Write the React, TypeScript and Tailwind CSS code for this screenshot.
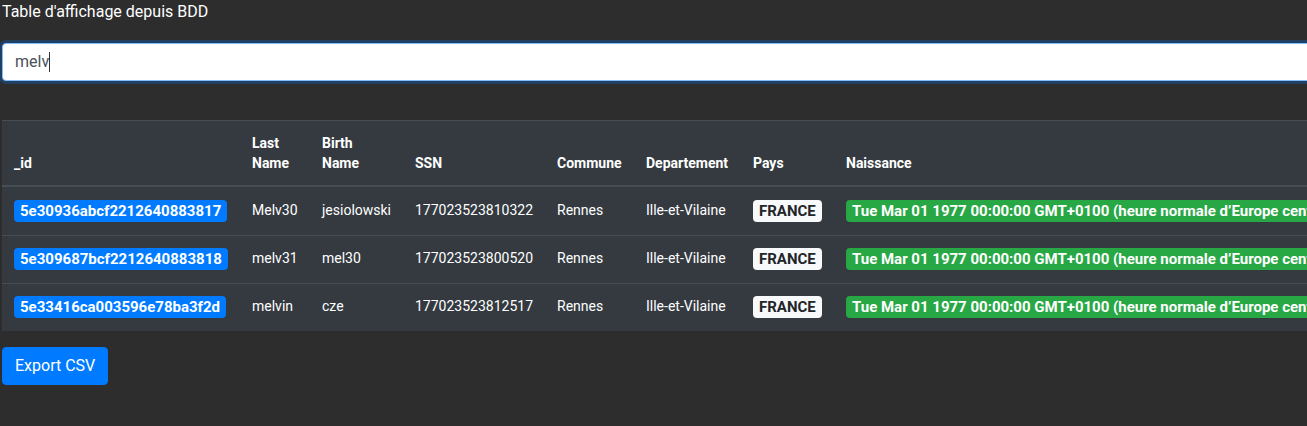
import React from "react";

const rows = [
  { id: "5e30936abcf2212640883817", last: "Melv30", birth: "jesiolowski", ssn: "177023523810322" },
  { id: "5e309687bcf2212640883818", last: "melv31", birth: "mel30", ssn: "177023523800520" },
  { id: "5e33416ca003596e78ba3f2d", last: "melvin", birth: "cze", ssn: "177023523812517" },
];

const cols = "grid grid-cols-[238px_70px_93px_142px_89px_107px_93px_1fr]";

export default function App() {
  return (
    <div className="w-full h-[426px] overflow-hidden bg-[#2d2d2d] font-['Roboto','Liberation_Sans',sans-serif] text-white">
      <div className="w-[1420px] pl-[2px]">
        <p className="text-base leading-6 text-white">Table d'affichage depuis BDD</p>

        {/* search field */}
        <div className="mt-[19px] h-[38px] w-[1400px] rounded bg-white border border-[#80bdff] shadow-[0_0_0_3px_rgba(0,123,255,0.25)] px-3 flex items-center text-base text-[#495057]">
          melv<span className="inline-block w-px h-[20px] bg-[#333]"></span>
        </div>

        {/* table */}
        <div className="mt-[39px] bg-[#343a40] text-sm">
          <div className={`${cols} border-t border-b-2 border-[#454d55] font-bold leading-5 items-end`}>
            <div className="p-3">_id</div>
            <div className="p-3">Last<br />Name</div>
            <div className="p-3">Birth<br />Name</div>
            <div className="p-3">SSN</div>
            <div className="p-3">Commune</div>
            <div className="p-3">Departement</div>
            <div className="p-3">Pays</div>
            <div className="p-3">Naissance</div>
          </div>
          {rows.map((r, i) => (
            <div key={r.id} className={`${cols} h-[48px] leading-5 ${i > 0 ? "border-t border-[#454d55]" : "pt-px"}`}>
              <div className="px-3 pt-3">
                <span className="inline-block h-[22px] px-[6px] rounded bg-[#007bff] text-[15px] leading-[22px] font-bold">{r.id}</span>
              </div>
              <div className="px-3 pt-3">{r.last}</div>
              <div className="px-3 pt-3">{r.birth}</div>
              <div className="px-3 pt-3">{r.ssn}</div>
              <div className="px-3 pt-3">Rennes</div>
              <div className="px-3 pt-3">Ille-et-Vilaine</div>
              <div className="px-3 pt-3">
                <span className="inline-block h-[22px] px-[6px] rounded bg-[#f8f9fa] text-[#212529] text-[15px] leading-[22px] font-bold">FRANCE</span>
              </div>
              <div className="px-3 pt-3 whitespace-nowrap">
                <span className="inline-block h-[22px] px-[6px] rounded bg-[#28a745] text-[15px] leading-[22px] font-bold">
                  Tue Mar 01 1977 00:00:00 GMT+0100 (heure normale d’Europe centrale)
                </span>
              </div>
            </div>
          ))}
        </div>

        <button className="mt-4 h-[38px] px-3 rounded bg-[#007bff] border border-[#007bff] text-base text-white">
          Export CSV
        </button>
      </div>
    </div>
  );
}
